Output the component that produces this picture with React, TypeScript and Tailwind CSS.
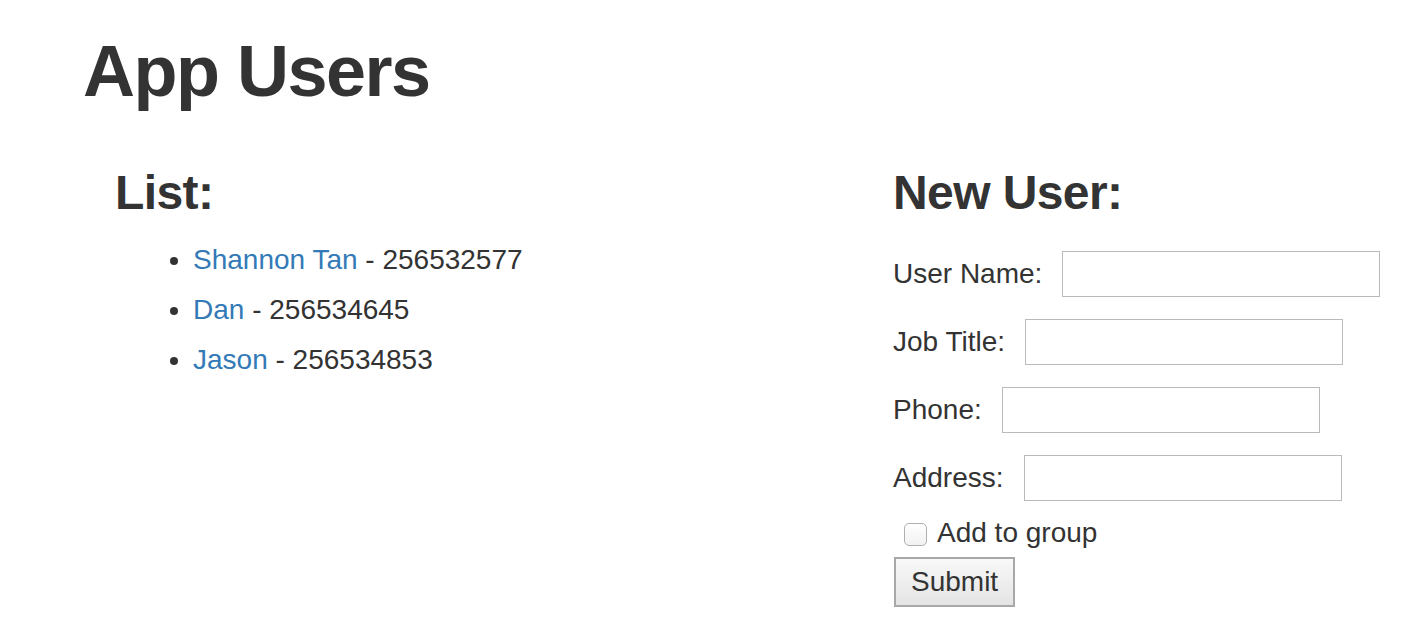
import React from 'react';

const users = [
  { name: 'Shannon Tan', phone: '256532577' },
  { name: 'Dan', phone: '256534645' },
  { name: 'Jason', phone: '256534853' },
];

const fields = ['User Name:', 'Job Title:', 'Phone:', 'Address:'];

export default function App() {
  return (
    <div className="min-h-screen bg-white pt-[32px] pl-[83px] text-[#333] font-['Liberation_Sans','Helvetica_Neue',Arial,sans-serif]">
      <h1 className="text-[72px] leading-[1.1] font-bold tracking-[-1.5px]">App Users</h1>

      <div className="flex mt-[56px]">
        {/* List column */}
        <div className="w-[810px] pl-[32px]">
          <h2 className="text-[48px] leading-[1.1] font-bold tracking-[-0.6px]">List:</h2>
          <ul className="list-disc pl-[78px] mt-[15px] text-[28px]">
            {users.map((u) => (
              <li key={u.phone} className="h-[50px] leading-[50px]">
                <a href="#" className="text-[#337ab7]">{u.name}</a> - {u.phone}
              </li>
            ))}
          </ul>
        </div>

        {/* Form column */}
        <div>
          <h2 className="text-[48px] leading-[1.1] font-bold tracking-[-0.6px]">New User:</h2>
          <form className="mt-[31px] text-[28px]" onSubmit={(e) => e.preventDefault()}>
            {fields.map((f) => (
              <div key={f} className="flex items-center gap-5 mb-[22px] last-of-type:mb-0">
                <label>{f}</label>
                <input type="text" className="w-[318px] h-[46px] border border-[#bababa] bg-white outline-none" />
              </div>
            ))}
            <label className="flex items-center h-[40px] mt-[12px] pl-[11px] gap-[10px] leading-[40px]">
              <input
                type="checkbox"
                className="appearance-none w-[23px] h-[23px] rounded-[5px] border border-[#b0b0b0] bg-gradient-to-b from-white to-[#f1f1f1] mt-[4px]"
              />
              Add to group
            </label>
            <button
              type="submit"
              className="mt-[4px] ml-[1px] h-[50px] px-[15px] border-2 border-[#a8a8a8] bg-gradient-to-b from-[#f8f8f8] to-[#e4e4e4] text-[28px] leading-none text-[#333]"
            >
              Submit
            </button>
          </form>
        </div>
      </div>
    </div>
  );
}
